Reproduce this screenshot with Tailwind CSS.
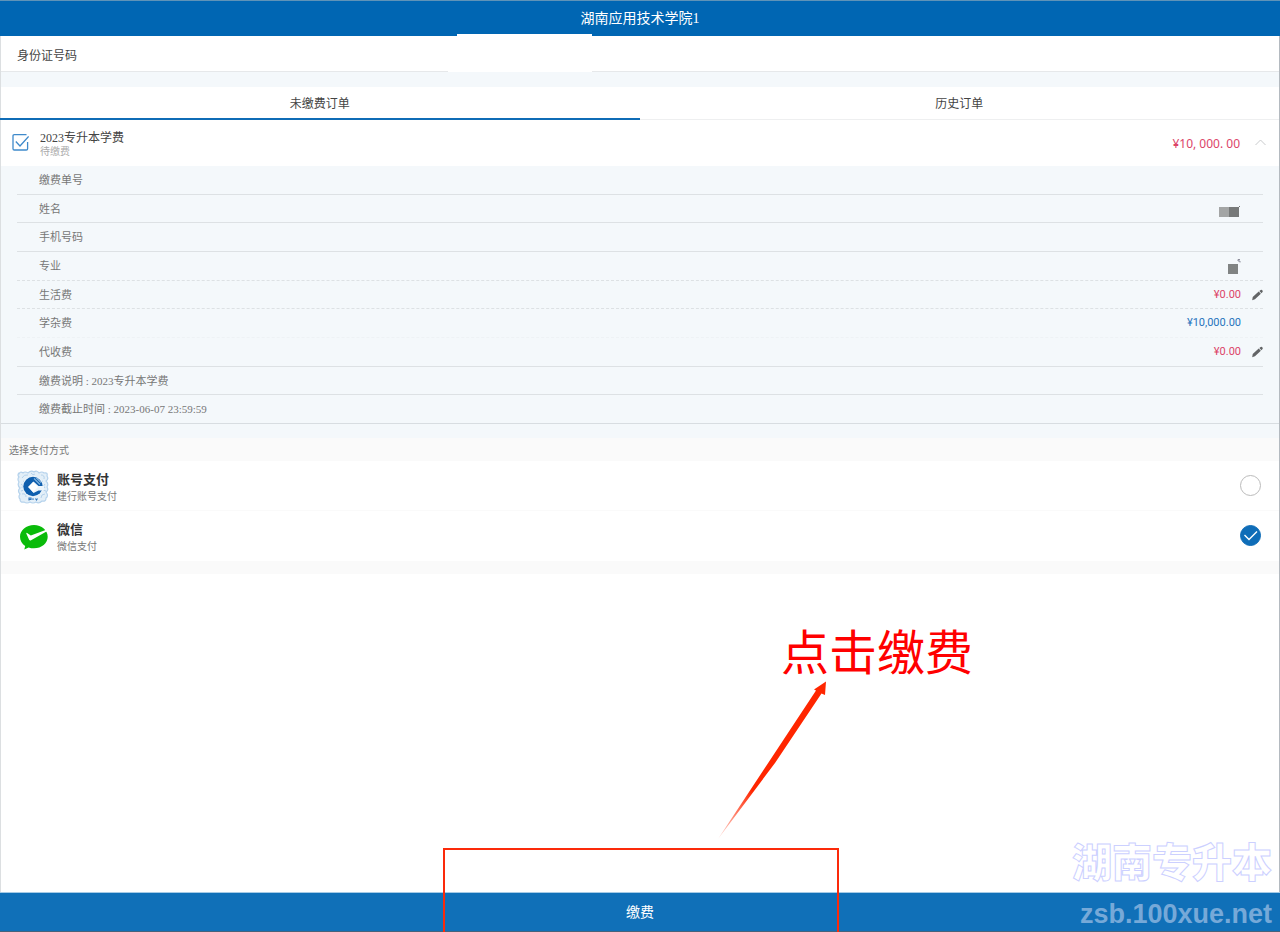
<!DOCTYPE html>
<html lang="zh-CN">
<head>
<meta charset="utf-8">
<meta name="viewport" content="width=device-width, initial-scale=1">
<title>湖南应用技术学院1</title>
<script src="https://cdn.jsdelivr.net/npm/@tailwindcss/browser@4"></script>
</head>
<body class="bg-white font-['Liberation_Serif','Noto_Sans_CJK_SC',sans-serif] text-[#444]">
<div class="relative flex min-h-screen flex-col overflow-hidden">

  <header class="relative flex h-9 items-center justify-center border-t border-[#5f93b8] bg-[#0066b3] text-white">
    <h1 class="text-sm leading-5">湖南应用技术学院1</h1>
    <span class="absolute bottom-0 left-[457px] h-[2px] w-[135px] bg-white"></span>
  </header>

  <main class="flex flex-1 flex-col border-l border-r border-l-[#dcdfe1] border-r-[#b4bac0]">
    <section class="relative flex h-9 items-center border-b border-[#e6e8ea] pt-1 pl-4 text-xs">
      <span>身份证号码</span>
      <span class="absolute -bottom-px left-[447px] h-px w-[144px] bg-white"></span>
    </section>

    <nav class="flex border-t-[15px] border-t-[#f4f8fb] text-xs">
      <button type="button" class="-ml-px h-[33px] flex-1 border-b-2 border-[#0f6cb6] pt-0.5">未缴费订单</button>
      <button type="button" class="h-[33px] flex-1 border-b border-[#eeeff0] pt-px">历史订单</button>
    </nav>

    <section class="flex h-[46px] items-center pr-[13px] pl-[10px]">
      <label class="flex flex-1 items-center">
        <span class="grid size-[18px] shrink-0">
          <input type="checkbox" checked class="peer col-start-1 row-start-1 size-[18px] appearance-none">
          <svg class="pointer-events-none col-start-1 row-start-1" width="18" height="18" viewBox="0 0 18 18" fill="none" stroke="#3f8acb" stroke-width="1.3"><path d="M15.500.7H3.300Q2 .7 2 2v12.700q0 1.300 1.300 1.300h12q1.300 0 1.300-1.300V8"/><path d="M4.800 7.500 9 12 17.600 2.500"/></svg>
        </span>
        <span class="ml-[11px] flex flex-col pt-0.5">
          <span class="text-xs leading-4 text-[#444]">2023专升本学费</span>
          <span class="text-[10px] leading-3 text-[#aaa]">待缴费</span>
        </span>
      </label>
      <span class="pt-px font-['Noto_Sans',sans-serif] text-[12px] text-[#dc4468]">¥10, 000. 00</span>
      <button type="button" aria-label="收起" class="ml-[15px]">
        <svg width="11" height="9" viewBox="0 0 11 9" fill="none" stroke="#c8cacc"><path d="M.5 6 5.500 1 10.500 6"/></svg>
      </button>
    </section>

    <section class="border-b border-[#d8dde1] bg-[#f4f8fb] px-4 text-[11px] leading-4 text-[#777]">
      <div class="flex h-[29px] items-center border-b border-[#dde1e4] pl-[22px]">缴费单号</div>
      <div class="flex h-7 items-center justify-between border-b border-[#dde1e4] pr-[22px] pl-[22px]">
        <span>姓名</span>
        <svg width="22" height="16" viewBox="0 0 22 16"><path fill="#a3a5a5" d="M0 6h10v10H0z"/><path fill="#777979" d="M10 6h10v10H10z"/><path stroke="#777" d="m20 6 1-1"/></svg>
      </div>
      <div class="flex h-[29px] items-center border-b border-[#dde1e4] pl-[22px]">手机号码</div>
      <div class="flex h-[29px] items-center justify-between border-b border-dashed border-[#dde1e4] pr-[22px] pl-[22px]">
        <span>专业</span>
        <svg width="13" height="16" viewBox="0 0 13 16"><path fill="#808383" d="M0 6h10v10H0z"/><path fill="none" stroke="#778" stroke-width=".8" d="M12 1.500h-2v1.500h2v1.500"/></svg>
      </div>
      <div class="flex h-7 items-center border-b border-dashed border-[#dde1e4] pl-[22px]">
        <label for="living" class="flex-1">生活费</label>
        <input id="living" value="¥0.00" class="w-20 text-right font-[Roboto,sans-serif] text-[#dc4468]">
        <button type="button" aria-label="修改生活费" class="ml-[11px]"><svg width="11" height="12" viewBox="0 0 12 12" fill="#626466"><path d="M.8 8.200 7.300 2.200 9.700 4.500 3.200 10.600.2 11.600zM8 1.700 9.500.5q.8-.5 1.400.1l.7.700q.4.700-.1 1.300L10.300 4z"/></svg></button>
      </div>
      <div class="flex h-[29px] items-center justify-between border-b border-dashed border-[#eef2f5] pr-[22px] pl-[22px]">
        <span>学杂费</span>
        <span class="font-[Roboto,sans-serif] text-[#2774bd]">¥10,000.00</span>
      </div>
      <div class="flex h-[29px] items-center border-b border-[#dde1e4] pl-[22px]">
        <label for="agency" class="flex-1">代收费</label>
        <input id="agency" value="¥0.00" class="w-20 text-right font-[Roboto,sans-serif] text-[#dc4468]">
        <button type="button" aria-label="修改代收费" class="ml-[11px]"><svg width="11" height="12" viewBox="0 0 12 12" fill="#626466"><path d="M.8 8.200 7.300 2.200 9.700 4.500 3.200 10.600.2 11.600zM8 1.700 9.500.5q.8-.5 1.400.1l.7.700q.4.700-.1 1.300L10.300 4z"/></svg></button>
      </div>
      <div class="flex h-7 items-center border-b border-[#dde1e4] pl-[22px]">缴费说明 : 2023专升本学费</div>
      <div class="flex h-7 items-center pl-[22px]">缴费截止时间 : 2023-06-07 23:59:59</div>
    </section>

    <section role="radiogroup" aria-labelledby="pay-title" class="border-t-[14px] border-b-[13px] border-t-[#f4f8fb] border-b-[#fafafa]">
      <h2 id="pay-title" class="bg-[#fafafa] pt-[5px] pb-[3px] pl-2 text-[10px] leading-[15px] text-[#777]">选择支付方式</h2>
      <label class="flex h-[50px] items-center border-b border-[#fafafa] pr-[18px] pl-4">
        <svg class="mt-[2px] shrink-0" width="32" height="34" viewBox="0 0 32 34">
          <g fill="#e3eff8" stroke="#b5d2ec" stroke-linejoin="round">
            <path stroke-width="1.200" d="M2 4Q3 1 6 3q2-2 5 0 3-3 6-1 3-2 5 1 3-2 5 0 4-1 3 3 2 3-1 5 3 3 1 6 2 3-1 5 3 4 0 6 0 4-4 3-3 3-6 1-3 2-6 0-3 2-6 0-4 1-4-3-2-2 0-5-3-3 0-6-3-3-1-6-2-3 0-5-2-2 0-4z"/>
            <path fill="none" d="M5 8q2-4 6-3M24 5q4 0 3 4M4 14q3 1 1 4M28 14q-3 2 0 4M5 24q4-1 4 3M24 28q0-4 4-4M14 3q2 3 4 1M6 11l2 1M26 11l-2 1M4 21l3-1M29 21l-3-1"/>
          </g>
          <circle cx="16" cy="16.500" r="10.500" fill="#edf5fb"/>
          <circle cx="16" cy="16.500" r="9.700" fill="#0f5fae"/>
          <path fill="#edf5fb" d="m16.500 11.500 5 4.500H27v4.500h-5.500l-5 2.500-5-6z"/>
          <path fill="#fff" d="m16 12 5 5-5 5-5-5z"/>
          <path d="m19 7.500 5 5M17 8.500l6 6" stroke="#83b4df" stroke-width="1.100"/>
          <path fill="none" d="M12 30.500v-2.500h2v1.500h-2M16 30v-1.800M18.500 28.500l1 1.500 1-1.500" stroke="#2c74bb" stroke-width="1.100"/>
        </svg>
        <span class="ml-2 flex flex-1 flex-col pt-[5px]">
          <b class="text-[13px] leading-[18px] text-[#333]">账号支付</b>
          <span class="text-[10px] leading-4 text-[#777]">建行账号支付</span>
        </span>
        <span class="grid size-[21px]">
          <input type="radio" name="pay" class="peer col-start-1 row-start-1 size-[21px] appearance-none rounded-full border border-[#bbb] checked:border-[#0f6db8] checked:bg-[#0f6db8]">
          <svg class="pointer-events-none invisible col-start-1 row-start-1 peer-checked:visible" width="21" height="21" viewBox="0 0 21 21" fill="none" stroke="#fff" stroke-width="1.400"><path d="m4.500 10 4.500 4.500 8-8"/></svg>
        </span>
      </label>
      <label class="flex h-[50px] items-center pr-[18px] pb-px pl-4">
        <svg class="mt-[2px] shrink-0" width="32" height="28" viewBox="0 0 32 28">
          <path fill="#0abb0a" d="M17 2C9.200 2 3 7.200 3 13.700c0 3.800 2 7.100 5.200 9.200L7.300 26.500l4.300-2.100c1.700.6 3.500.9 5.400.9 7.700 0 13.700-5.200 13.700-11.600S24.700 2 17 2z"/>
          <path fill="#fff" d="M9.300 10.500q.1-1.200 1.200-.3l3.300 2.200L30 6.600l.8 1.200L14.100 17.200q-1.300.7-2-.5z"/>
        </svg>
        <span class="ml-2 flex flex-1 flex-col pt-1">
          <b class="text-[13px] leading-[18px] text-[#333]">微信</b>
          <span class="text-[10px] leading-4 text-[#777]">微信支付</span>
        </span>
        <span class="grid size-[21px]">
          <input type="radio" name="pay" checked class="peer col-start-1 row-start-1 size-[21px] appearance-none rounded-full border border-[#bbb] checked:border-[#0f6db8] checked:bg-[#0f6db8]">
          <svg class="pointer-events-none invisible col-start-1 row-start-1 peer-checked:visible" width="21" height="21" viewBox="0 0 21 21" fill="none" stroke="#fff" stroke-width="1.400"><path d="m4.500 10 4.500 4.500 8-8"/></svg>
        </span>
      </label>
    </section>
  </main>

  <button type="button" class="h-10 w-full border-t border-b border-t-[#a5cbe6] border-b-[#46637c] bg-[#1070b8] pt-0.5 text-sm text-white">缴费</button>

  <!-- Callout over the pay button -->
  <div class="pointer-events-none absolute bottom-0 left-1/2 h-[84px] w-[396px] -translate-x-[197px] border-2 border-b-0 border-[#fb2a0a]"></div>
  <svg class="pointer-events-none absolute bottom-[92px] left-1/2 translate-x-[78px]" width="110" height="160" viewBox="0 0 110 160">
    <defs><linearGradient id="tail" x1="0" y1="1" x2=".3" y2=".55"><stop offset="0" stop-color="#ff2600" stop-opacity=".15"/><stop offset=".8" stop-color="#ff2600"/></linearGradient></defs>
    <path fill="url(#tail)" d="M0 159 98 10.500 96 9.500 108 1.500 107 15 103.500 13.500 57 83z"/>
  </svg>
  <p class="pointer-events-none absolute bottom-[247px] left-1/2 translate-x-[141px] font-['Noto_Sans_CJK_SC',sans-serif] text-5xl leading-[72px] text-[#ff0000]">点击缴费</p>

  <!-- Watermark -->
  <div class="pointer-events-none absolute right-2 bottom-1 flex flex-col items-end whitespace-nowrap font-['Liberation_Sans','Noto_Sans_CJK_SC',sans-serif]">
    <span class="text-[40px] leading-[74px] font-black text-white/40 [-webkit-text-stroke:1px_#ccd0ff]">湖南专升本</span>
    <span class="text-[27px] leading-7 font-bold text-[#76a9d8]">zsb.100xue.net</span>
  </div>
</div>
</body>
</html>
